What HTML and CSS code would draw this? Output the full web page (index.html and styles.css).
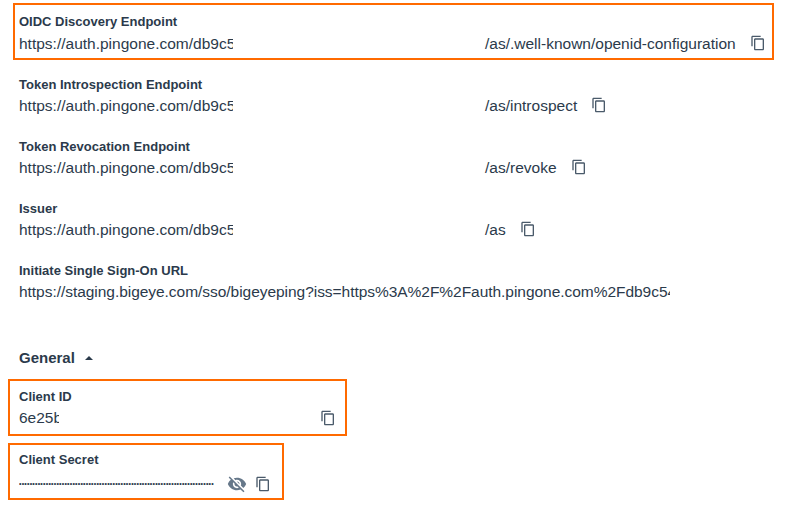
FILE: index.html
```html
<!DOCTYPE html>
<html lang="en">
<head>
<meta charset="utf-8">
<title>Application configuration</title>
<link rel="stylesheet" href="styles.css">
</head>
<body>
<svg class="defs" width="0" height="0" aria-hidden="true">
  <symbol id="copy" viewBox="0 0 24 24"><path d="M16 1H4c-1.1 0-2 .9-2 2v14h2V3h12V1zm3 4H8c-1.1 0-2 .9-2 2v14c0 1.1.9 2 2 2h11c1.1 0 2-.9 2-2V7c0-1.1-.9-2-2-2zm0 16H8V7h11v14z"/></symbol>
</svg>
<main class="page">
  <section class="field boxed box-wide">
    <div class="label">OIDC Discovery Endpoint</div>
    <div class="value">
      <span class="clip">https://auth.pingone.com/db9c54</span><span class="suffix">/as/.well-known/openid-configuration</span>
      <svg class="icon"><use href="#copy"/></svg>
    </div>
  </section>
  <section class="field">
    <div class="label">Token Introspection Endpoint</div>
    <div class="value">
      <span class="clip">https://auth.pingone.com/db9c54</span><span class="suffix">/as/introspect</span>
      <svg class="icon"><use href="#copy"/></svg>
    </div>
  </section>
  <section class="field">
    <div class="label">Token Revocation Endpoint</div>
    <div class="value">
      <span class="clip">https://auth.pingone.com/db9c54</span><span class="suffix">/as/revoke</span>
      <svg class="icon"><use href="#copy"/></svg>
    </div>
  </section>
  <section class="field">
    <div class="label">Issuer</div>
    <div class="value">
      <span class="clip">https://auth.pingone.com/db9c54</span><span class="suffix">/as</span>
      <svg class="icon"><use href="#copy"/></svg>
    </div>
  </section>
  <section class="field">
    <div class="label">Initiate Single Sign-On URL</div>
    <div class="value">
      <span class="clip clip-long">https://staging.bigeye.com/sso/bigeyeping?iss=https%3A%2F%2Fauth.pingone.com%2Fdb9c54</span>
    </div>
  </section>
  <h2 class="heading">General <span class="caret"></span></h2>
  <section class="field boxed box-id">
    <div class="label">Client ID</div>
    <div class="value">
      <span class="clip clip-id">6e25b</span>
      <svg class="icon"><use href="#copy"/></svg>
    </div>
  </section>
  <section class="field boxed box-secret">
    <div class="label">Client Secret</div>
    <div class="value">
      <span class="dots">•••••••••••••••••••••••••••••••••••••••••••••••••••••••••••••••••••••••••</span>
      <svg class="icon icon-eye" viewBox="0 0 24 24"><path d="M12 7c2.76 0 5 2.24 5 5 0 .65-.13 1.26-.36 1.83l2.92 2.92c1.51-1.26 2.7-2.89 3.43-4.75-1.73-4.39-6-7.5-11-7.5-1.4 0-2.74.25-3.98.7l2.16 2.16C10.74 7.13 11.35 7 12 7zM2 4.27l2.28 2.28.46.46C3.08 8.3 1.78 10.02 1 12c1.73 4.39 6 7.5 11 7.5 1.55 0 3.03-.3 4.38-.84l.42.42L19.73 22 21 20.73 3.27 3 2 4.27zM7.53 9.8l1.55 1.55c-.05.21-.08.43-.08.65 0 1.66 1.34 3 3 3 .22 0 .44-.03.65-.08l1.55 1.55c-.67.33-1.41.53-2.2.53-2.76 0-5-2.24-5-5 0-.79.2-1.53.53-2.2zm4.31-.78l3.15 3.15.02-.16c0-1.66-1.34-3-3-3l-.17.01z"/></svg>
      <svg class="icon"><use href="#copy"/></svg>
    </div>
  </section>
</main>
</body>
</html>
```

FILE: styles.css
```css
* { box-sizing: border-box; }
html, body { margin: 0; background: #fff; }
body {
  font-family: "Liberation Sans", Arial, sans-serif;
  color: #2b3a4b;
  overflow: hidden;
}
.defs { display: block; height: 0; }
.page {
  display: flex;
  flex-direction: column;
  padding: 3px 0 0 8px;
}
.field {
  margin-left: 11px;
  height: 62px;
  padding-top: 12px;
}
.boxed {
  border: 2px solid #ff6a00;
  height: 57px;
}
.box-wide {
  margin-left: 5px;
  width: 761px;
  margin-bottom: 5px;
  padding: 9px 0 0 4px;
}
.label {
  font-size: 13px;
  font-weight: 700;
  line-height: 16px;
  color: #2b3a4b;
}
.value {
  display: flex;
  align-items: center;
  height: 22px;
  margin-top: 2px;
  font-size: 15.5px;
  line-height: 20px;
  white-space: nowrap;
}
.box-wide .value { margin-top: 3px; }
.clip {
  display: block;
  width: 214px;
  overflow: hidden;
  flex: none;
}
.clip-long {
  width: 651px;
  letter-spacing: -0.04px;
}
.clip-id { width: 40px; }
.suffix { margin-left: 252px; }
.icon {
  flex: none;
  width: 16px;
  height: 16px;
  margin: 0 0 2px 14px;
  fill: #4a5a6a;
}
.heading {
  margin: 34px 0 0 11px;
  height: 22px;
  font-size: 15px;
  font-weight: 700;
  line-height: 22px;
  color: #2b3a4b;
}
.caret {
  display: inline-block;
  width: 0;
  height: 0;
  margin: 0 0 3px 6px;
  vertical-align: middle;
  border-left: 4.5px solid transparent;
  border-right: 4.5px solid transparent;
  border-bottom: 4.5px solid #2b3a4b;
}
.box-id {
  margin: 10px 0 0 0;
  width: 339px;
  padding: 8px 0 0 9px;
}
.box-id .value { margin-top: 2px; }
.box-id .icon { margin: 0 0 0 261px; }
.box-secret {
  margin: 7px 0 0 0;
  width: 276px;
  padding: 7px 0 0 9px;
}
.box-secret .value { margin-top: 5px; }
.dots {
  display: block;
  width: 195px;
  overflow: hidden;
  font-size: 7px;
  font-weight: 700;
  letter-spacing: 0.22px;
  flex: none;
}
.icon-eye {
  width: 20px;
  height: 20px;
  margin: 0 0 0 13px;
  fill: #66788a;
}
.icon-eye + .icon { margin: 0 0 0 8px; }
```
